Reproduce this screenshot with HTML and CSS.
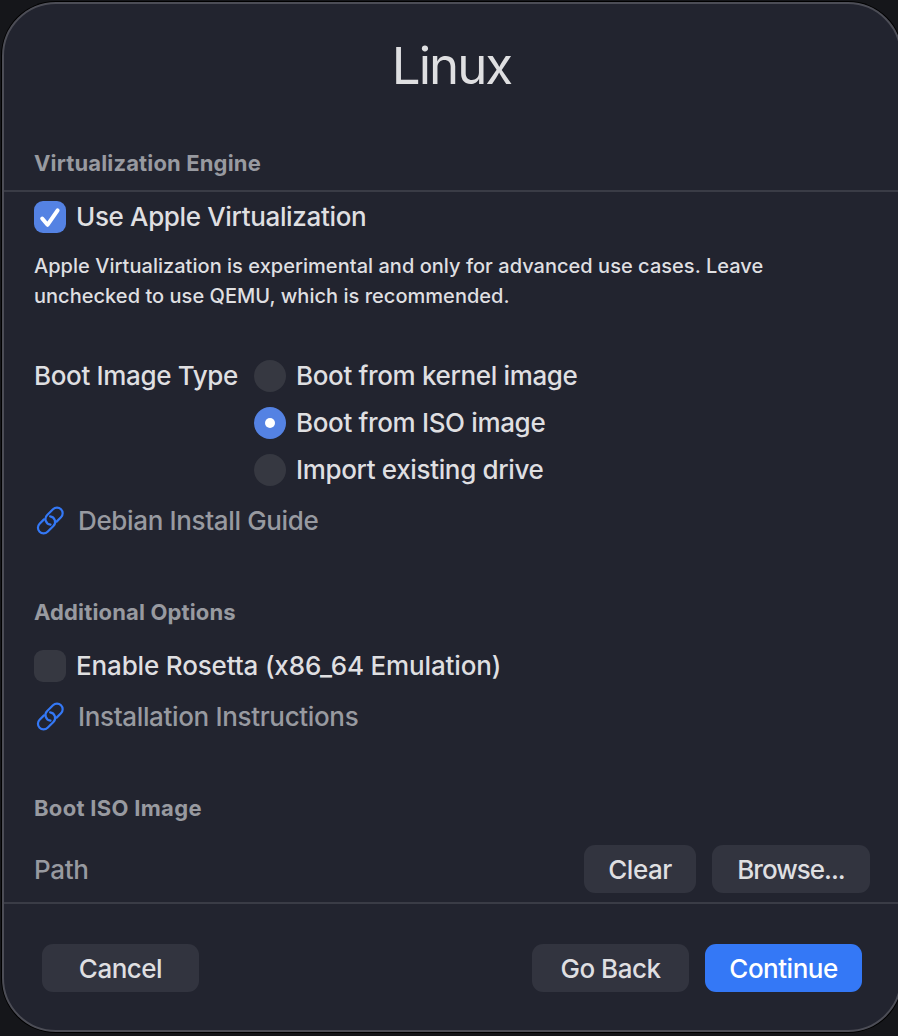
FILE: index.html
```
<!DOCTYPE html>
<html lang="en">

<head>
    <meta charset="UTF-8">
    <title>Linux</title>
    <link rel="stylesheet" href="styles.css">
</head>

<body>
    <!-- link icon, used by both guide links -->
    <svg class="sprite" width="0" height="0">
        <symbol id="link" viewBox="0 0 32 32">
            <path d="M22.6 16.6 L27 12.2 A5.6 5.6 0 0 0 19 4.2 L13.2 10 A5.6 5.6 0 0 0 16.5 19.6" />
            <path d="M10 14.4 L5.6 18.8 A5.6 5.6 0 0 0 13.6 26.8 L19.4 21 A5.6 5.6 0 0 0 16.1 11.4" />
        </symbol>
    </svg>

    <div class="sheet">
        <h1>Linux</h1>

        <div class="content">
            <h2 class="first">Virtualization Engine</h2>

            <div class="panel">
                <label class="option">
                    <span class="box checked">
                        <svg width="32" height="32" viewBox="0 0 32 32">
                            <path d="M8.2 17.5 L13.5 23.8 L23.6 9.3" />
                        </svg>
                    </span>
                    <span class="text">Use Apple Virtualization</span>
                </label>
                <p class="note">Apple Virtualization is experimental and only for advanced use cases. Leave<br>unchecked to use QEMU, which is recommended.</p>

                <div class="boot-type">
                    <span class="boot-label">Boot Image Type</span>
                    <div class="radios">
                        <label class="option"><span class="radio"></span><span class="text">Boot from kernel image</span></label>
                        <label class="option"><span class="radio selected"></span><span class="text">Boot from ISO image</span></label>
                        <label class="option"><span class="radio"></span><span class="text">Import existing drive</span></label>
                    </div>
                </div>
                <a class="guide"><svg class="link-icon"><use href="#link" /></svg><span class="text">Debian Install Guide</span></a>

                <h2>Additional Options</h2>
                <label class="option rosetta"><span class="box"></span><span class="text">Enable Rosetta (x86_64 Emulation)</span></label>
                <a class="guide install"><svg class="link-icon"><use href="#link" /></svg><span class="text">Installation Instructions</span></a>

                <h2 class="iso">Boot ISO Image</h2>
                <div class="path-row">
                    <span class="path">Path</span>
                    <button class="clear">Clear</button>
                    <button class="browse">Browse...</button>
                </div>
            </div>
        </div>

        <div class="footer">
            <button class="cancel">Cancel</button>
            <button>Go Back</button>
            <button class="primary">Continue</button>
        </div>
    </div>
</body>

</html>
```
FILE: styles.css
```
* {
    box-sizing: border-box;
}

body {
    margin: 0;
    padding: 2px 0 0 2px;
    height: 1036px;
    overflow: hidden;
    background-color: #15161a;
    color: #dfdfe1;
    font-family: Inter, "Liberation Sans", sans-serif;
    font-size: 26px;
    font-weight: 450;
    letter-spacing: -0.35px;
}

.sprite {
    position: absolute;
}

/* dialog window */
.sheet {
    width: 900px;
    height: 1030px;
    border: 2px solid #4c4d56;
    border-radius: 54px;
    background-color: #22242f;
    box-shadow: 0 0 0 1px #000;
    display: flex;
    flex-direction: column;
}

h1 {
    margin: 0;
    height: 132px;
    padding-right: 1px;
    line-height: 123px;
    text-align: center;
    font-size: 51px;
    font-weight: 400;
    letter-spacing: -2px;
}

h2 {
    margin: 59px 0 0;
    height: 32px;
    line-height: 32px;
    font-size: 22px;
    font-weight: 700;
    letter-spacing: 0.15px;
    color: #989aa0;
}

h2.first {
    margin: 0;
    height: 54px;
    line-height: 54px;
    padding-left: 30px;
}

h2.iso {
    letter-spacing: 0.3px;
}

.panel {
    height: 714px;
    padding: 9px 30px 0 30px;
    border-top: 2px solid #3a3c46;
    border-bottom: 2px solid #3a3c46;
}

.option {
    display: flex;
    align-items: center;
    gap: 10px;
    height: 32px;
    white-space: nowrap;
}

.text {
    padding-bottom: 2px;
}

.box,
.radio {
    width: 32px;
    height: 32px;
    flex: none;
    background-color: #363841;
}

.box {
    border-radius: 9px;
}

.box svg {
    display: block;
    fill: none;
    stroke: #fff;
    stroke-width: 4;
    stroke-linecap: round;
    stroke-linejoin: round;
}

.box.checked,
.radio.selected {
    background-color: #5482e3;
}

.radio {
    border-radius: 50%;
    display: flex;
    align-items: center;
    justify-content: center;
}

.radio.selected::after {
    content: "";
    width: 10px;
    height: 10px;
    border-radius: 50%;
    background-color: #fff;
}

.note {
    margin: 18px 0 49px;
    font-size: 20px;
    line-height: 30px;
    letter-spacing: 0.03px;
    white-space: nowrap;
}

.boot-type {
    display: flex;
    margin-bottom: 19px;
}

.boot-label {
    width: 220px;
    line-height: 32px;
    white-space: nowrap;
}

.radios {
    display: flex;
    flex-direction: column;
    gap: 15px;
}

/* guide links */
.guide {
    display: flex;
    align-items: center;
    gap: 12px;
    height: 32px;
    color: #989aa0;
}

.link-icon {
    width: 32px;
    height: 32px;
    fill: none;
    stroke: #3478f6;
    stroke-width: 2.2;
    stroke-linecap: round;
}

.rosetta {
    margin-top: 22px;
    letter-spacing: -0.15px;
}

.install {
    margin-top: 19px;
}

.path-row {
    display: flex;
    align-items: center;
    gap: 16px;
    margin-top: 21px;
}

.path {
    flex: 1;
    color: #989aa0;
}

button {
    width: 157px;
    height: 48px;
    padding: 0;
    border: none;
    border-radius: 11px;
    background-color: #32343f;
    color: #dfdfe1;
    font: inherit;
    letter-spacing: -0.5px;
}

.clear {
    width: 112px;
}

.browse {
    width: 158px;
    letter-spacing: -1px;
}

.footer {
    display: flex;
    gap: 16px;
    padding: 40px 38px 0 38px;
}

.cancel {
    margin-right: auto;
}

.primary {
    background-color: #3478f6;
    color: #fff;
}
```
